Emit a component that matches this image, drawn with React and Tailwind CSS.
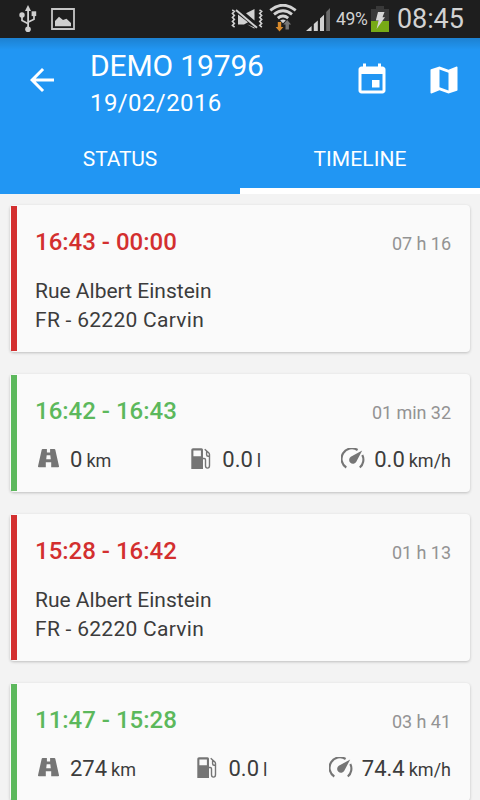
function UsbIcon() {
  return (
    <svg className="h-[28px] w-[18px] shrink-0" viewBox="0 0 18 28" fill="#cfcfcf">
      <path d="M9 0l3 6H6z" />
      <path d="M8.2 5h1.8v18H8.2z" />
      <circle cx="9" cy="24.2" r="2.8" />
      <circle cx="3" cy="10" r="2.7" />
      <path d="M12.6 6.3h4.6v4.8h-4.6z" />
      <path d="M3 11v4.4l5.8 3M15 10v4.2L9.4 17" fill="none" stroke="#cfcfcf" strokeWidth="1.7" />
    </svg>
  );
}

function PictureIcon() {
  return (
    <svg className="h-[22px] w-[24px] shrink-0" viewBox="0 0 24 22">
      <path d="M1 1h22v20H1z" fill="none" stroke="#c6c6c6" strokeWidth="1.8" />
      <path d="M4 18.3V13l4-4.3 4 3.4 3.5-1.3L20 15v3.3z" fill="#cfcfcf" />
    </svg>
  );
}

function VibrateMuteIcon() {
  return (
    <svg className="h-[22px] w-[32px] shrink-0" viewBox="0 0 32 22" fill="none" stroke="#d2d2d2" strokeWidth="1.5">
      <path d="M1.2 2l2.2 1.4-2 2 2 2-2 2 2 2-2 2 2 2-2 2 2.2 1.8M28.5 2l2.2 1.4-2 2 2 2-2 2 2 2-2 2 2 2-2 2 2.2 1.8" />
      <path d="M7 6.5v10h6l4-2.2zM15 5.2L23.5 1v11.5zM23.500 19.500v1.200l-7.500-4.500z" fill="#d2d2d2" stroke="none" />
      <path d="M5 2L26 19.800" strokeWidth="2" />
    </svg>
  );
}

function WifiIcon() {
  return (
    <svg className="h-[28px] w-[28px] shrink-0" viewBox="0 0 28 28" fill="none" stroke="#d2d2d2" strokeWidth="2.9">
      <path d="M1.3 6.3Q14 -3.8 26.7 6.3" />
      <path d="M5 10.4Q14 3.2 23 10.4" />
      <path d="M8.8 14.2Q14 10 19.2 14.2" />
      <path d="M11.2 16.6Q14 14.4 16.8 16.6L14 19.2z" fill="#d2d2d2" stroke="none" />
      <path d="M8.8 18h3.4v5h2.2l-3.9 4.6L6.6 23h2.2z" fill="#d98a2b" stroke="none" />
      <path d="M16.5 25.5v-5h-2.2l3.9-4.6 3.9 4.6h-2.2v5z" fill="#777" stroke="none" />
    </svg>
  );
}

function SignalIcon() {
  return (
    <svg className="h-[23px] w-[24px] shrink-0" viewBox="0 0 24 23" fill="#d2d2d2">
      <path d="M0 23l5.6-5v5zM7.8 16l4-3.6V23h-4zM14 10.5l4-3.8V23h-4z" />
      <path d="M20.2 4L24 0v23h-3.8z" fill="#6a6a6a" />
    </svg>
  );
}

function BatteryIcon() {
  return (
    <svg className="h-[26px] w-[18px] shrink-0" viewBox="0 0 18 26">
      <path d="M5 0h8v3h5v12H0V3h5z" fill="#393939" />
      <path d="M0 15h18v11H0z" fill="#77aa16" />
      <path d="M7 6h6.5l-2 5.3H14L5.6 23l2-8.5H4.8z" fill="#d6d6d6" />
    </svg>
  );
}

const ARROW = "M20 11H7.83l5.59-5.59L12 4l-8 8 8 8 1.41-1.41L7.83 13H20v-2z";
const EVENT =
  "M17 12h-5v5h5v-5zM16 1v2H8V1H6v2H5c-1.11 0-1.99.9-1.99 2L3 19c0 1.1.89 2 2 2h14c1.1 0 2-.9 2-2V5c0-1.1-.9-2-2-2h-1V1h-2zm3 18H5V8h14v11z";
const MAP =
  "M20.5 3l-.16.03L15 5.1 9 3 3.36 4.9c-.21.07-.36.25-.36.48V20.5c0 .28.22.5.5.5l.16-.03L9 18.9l6 2.1 5.64-1.9c.21-.07.36-.25.36-.48V3.5c0-.28-.22-.5-.5-.5zM15 19l-6-2.11V5l6 2.11V19z";

function ActionIcon({ d }) {
  return (
    <svg className="h-9 w-9 shrink-0" viewBox="0 0 24 24" fill="#fff">
      <path d={d} />
    </svg>
  );
}

function RoadIcon() {
  return (
    <svg className="mb-[2px] h-[22px] w-[21px]" viewBox="0 0 21 22" fill="#757575">
      <path
        fillRule="evenodd"
        d="M4.6 1h4.3v3.4h3.2V1h4.3q.7 0 .9.7L21 18.300q.2.900-.8.900h-7v-5H7.800v5h-7q-1 0-.8-.9L3.700 1.700Q3.900 1 4.600 1zM8.700 7.200l-.5 4h4.600l-.5-4z"
      />
    </svg>
  );
}

function FuelIcon() {
  return (
    <svg className="mb-[2px] h-[22px] w-[20px]" viewBox="0 0 20 22">
      <path
        fillRule="evenodd"
        fill="#757575"
        d="M2 .2h8.5q1.5 0 1.5 1.5v19.300H.3V1.700Q.3.200 2 .2zM2.400 2.500v5.700h7.500V2.500z"
      />
      <path
        d="M12 10.500h1.300q1.200 0 1.200 1.300V17.500q0 2.600 2 2.600T18.500 17.500V6.500q0-.8-.6-1.400L13.700 1.200M15.600 3.500v3.300q0 1.500 1.500 1.500h1.400"
        fill="none"
        stroke="#757575"
        strokeWidth="1.400"
      />
    </svg>
  );
}

function GaugeIcon() {
  return (
    <svg className="-mr-[2px] mb-[2px] h-[22px] w-[24px]" viewBox="0 0 24 22">
      <path
        d="M5.3 19.5A10.4 10.4 0 0 1 16.6 2M21.3 7A10.4 10.4 0 0 1 18.8 19.5"
        fill="none"
        stroke="#757575"
        strokeWidth="2.100"
      />
      <path d="M21.200 2.500L9.800 8.800A3.800 3.800 0 1 0 15.300 13.700z" fill="#757575" />
    </svg>
  );
}

function Stat({ icon, value, unit }) {
  return (
    <div className="flex items-center">
      {icon}
      <div className="ml-[11px] flex items-baseline text-[22px] leading-[28px] text-[#3c3c3c]">
        <span>{value}</span>
        <span className="ml-[4px] text-[18px]">{unit}</span>
      </div>
    </div>
  );
}

function Card({ trip, range, duration, children }) {
  return (
    <div className="flex shrink-0 rounded-[4px] bg-[#fafafa] p-px shadow-[0_1px_3px_rgba(0,0,0,0.22)]">
      <div className={trip ? "w-[6px] bg-[#5cb85c]" : "w-[6px] bg-[#d32f2f]"} />
      <div className="flex-1 pt-[21px] pr-[18px] pb-[16px] pl-[18px]">
        <div className="flex h-[30px] items-baseline justify-between">
          <span
            className={
              trip
                ? "text-[24px] leading-[30px] font-medium text-[#5cb85c]"
                : "text-[24px] leading-[30px] font-medium text-[#d32f2f]"
            }
          >
            {range}
          </span>
          <span className="text-[18px] leading-[30px] tracking-[-0.05px] text-[#939393]">{duration}</span>
        </div>
        {children}
      </div>
    </div>
  );
}

function Stop({ range, duration }) {
  return (
    <Card range={range} duration={duration}>
      <div className="mt-[20px] text-[21px] leading-[29px] text-[#3c3c3c]">
        <div>Rue Albert Einstein</div>
        <div className="tracking-[0.28px]">FR - 62220 Carvin</div>
      </div>
    </Card>
  );
}

function Trip({ range, duration, distance, fuel, speed }) {
  return (
    <Card trip range={range} duration={duration}>
      <div className="mt-[20px] mb-px flex h-[28px] items-center justify-between pl-[3px]">
        <Stat icon={<RoadIcon />} value={distance} unit="km" />
        <Stat icon={<FuelIcon />} value={fuel} unit="l" />
        <Stat icon={<GaugeIcon />} value={speed} unit="km/h" />
      </div>
    </Card>
  );
}

export default function App() {
  return (
    <div className="flex h-[800px] w-[480px] flex-col overflow-hidden bg-[#f3f3f3] font-[Roboto,sans-serif]">
      <div className="flex h-[38px] shrink-0 items-center bg-[#1e1e1e] pl-[19px] text-[#d2d2d2]">
        <UsbIcon />
        <div className="ml-[14px]"><PictureIcon /></div>
        <div className="ml-[156px]"><VibrateMuteIcon /></div>
        <div className="ml-[6px] pb-[2px]"><WifiIcon /></div>
        <div className="ml-[9px]"><SignalIcon /></div>
        <span className="ml-[6px] w-[35px] pt-[2px] text-[17.5px] leading-none tracking-[-0.3px] whitespace-nowrap">49%</span>
        <BatteryIcon />
        <span className="ml-[8px] text-[27px] leading-none tracking-[-0.1px]">08:45</span>
      </div>
      <header className="h-[156px] shrink-0 bg-[#2196f3] bg-[linear-gradient(to_bottom,rgba(0,0,0,0.14),transparent_12px)] text-white">
        <div className="flex h-[84px] items-center pl-[24px]">
          <ActionIcon d={ARROW} />
          <div className="ml-[30px] flex-1 pt-[10px]">
            <div className="text-[30px] leading-[36px] tracking-[-0.15px] whitespace-nowrap">DEMO 19796</div>
            <div className="text-[24px] leading-[38px] tracking-[0.4px]">19/02/2016</div>
          </div>
          <ActionIcon d={EVENT} />
          <div className="mr-[18px] ml-[36px]"><ActionIcon d={MAP} /></div>
        </div>
        <div className="flex h-[72px] text-center text-[21px] leading-[75px]">
          <div className="w-1/2 tracking-[-0.15px]">STATUS</div>
          <div className="w-1/2 border-b-[6px] border-white tracking-[0.1px]">TIMELINE</div>
        </div>
      </header>
      <main className="flex flex-1 flex-col gap-[22px] overflow-hidden px-[10px] pt-[11px]">
        <Stop range="16:43 - 00:00" duration="07 h 16" />
        <Trip range="16:42 - 16:43" duration="01 min 32" distance="0" fuel="0.0" speed="0.0" />
        <Stop range="15:28 - 16:42" duration="01 h 13" />
        <Trip range="11:47 - 15:28" duration="03 h 41" distance="274" fuel="0.0" speed="74.4" />
      </main>
    </div>
  );
}
